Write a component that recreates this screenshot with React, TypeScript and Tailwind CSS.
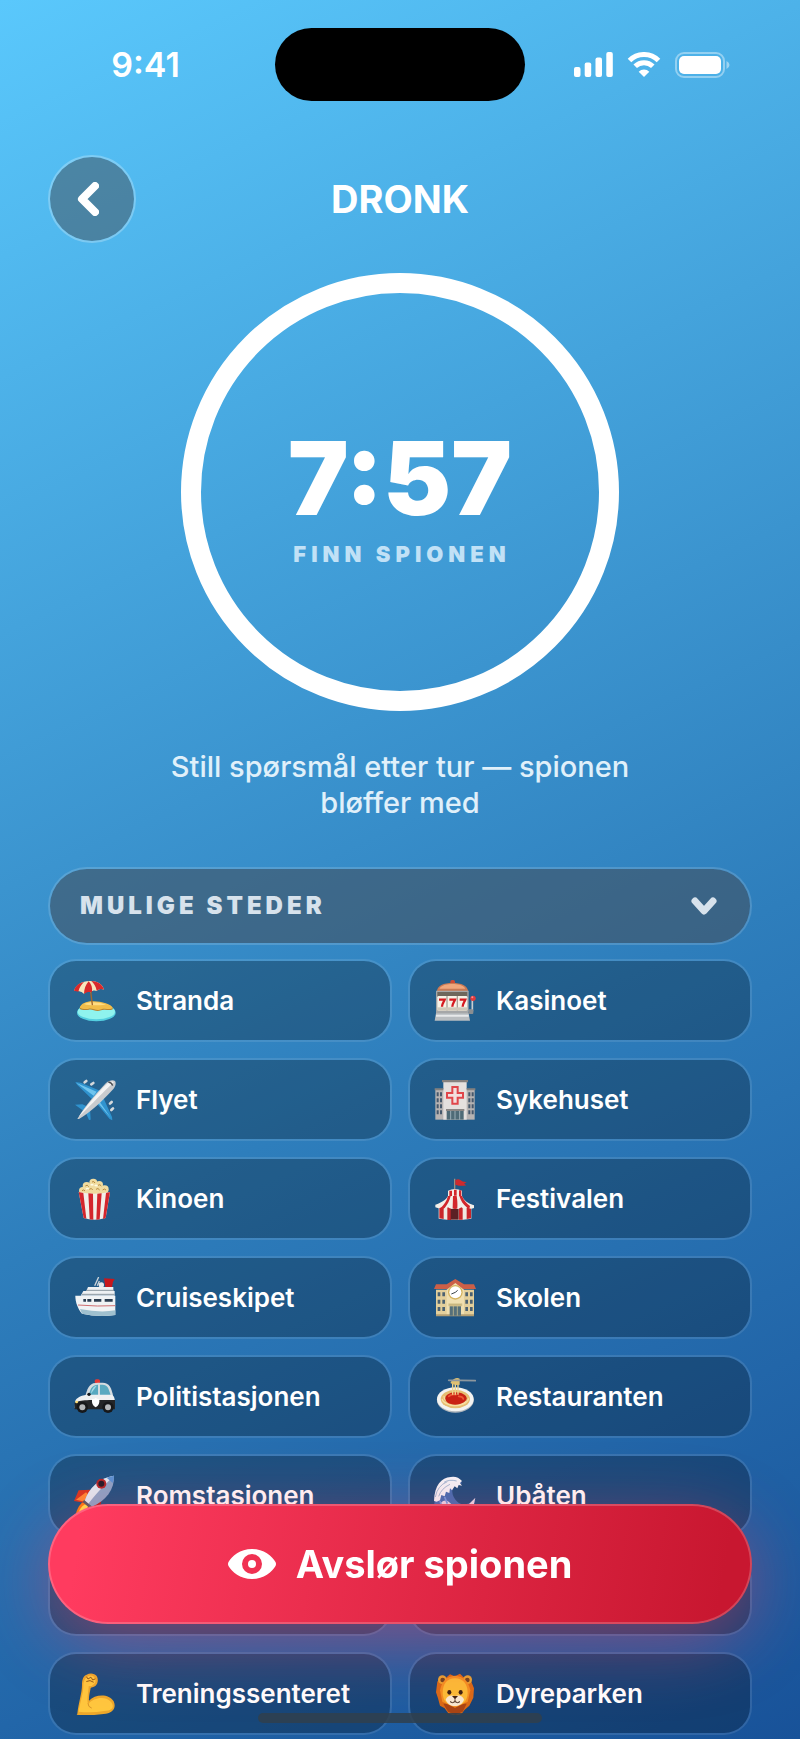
import type { ReactNode } from "react";

function Pic({ children }: { children: ReactNode }) {
  return (
    <svg viewBox="0 0 126 126" className="size-[42px] shrink-0" aria-hidden="true">
      {children}
    </svg>
  );
}

const Beach = () => (
  <Pic>
    <ellipse cx="67" cy="98" rx="58" ry="26" fill="#54cfe0" />
    <ellipse cx="67" cy="95" rx="56" ry="23" fill="#8ff3ee" />
    <path d="M17 86c2-14 22-22 42-21 24 0 56 10 58 22-8 8-24-2-36 4-14 7-24-4-36-2-10 2-22 2-28-3z" fill="#b98330" />
    <path d="M17 83c4-13 22-20 42-19 24 0 54 9 57 20-8 7-22-1-34 4-14 6-25-4-37-2-10 2-22 1-28-3z" fill="#f2bd4a" />
    <path d="M30 72c16-8 44-7 66 2-20 1-46 5-66-2z" fill="#ffdc83" />
    <path d="M50 34l5 40" stroke="#a3662a" strokeWidth="4" strokeLinecap="round" />
    <path d="M0 32C6 14 24 4 46 3c22-1 40 8 44 26-8-3-15-2-22 4-6-3-13-2-18 4-7-4-14-3-20 5-5-7-12-9-30-10z" fill="#f7e6bd" />
    <path d="M0 32C4 18 14 10 30 6 22 14 16 22 13 35zM30 42c0-14 5-28 14-38 8 8 12 18 10 33-8-2-16-2-24 5zM68 32C66 20 60 10 52 3c20 1 34 11 38 26-8-3-15-2-22 3z" fill="#d9292b" />
  </Pic>
);

const Slot = () => (
  <Pic>
    <rect x="49" y="0" width="14" height="12" rx="5" fill="#cf4b35" />
    <path d="M8 36C10 16 28 9 55 9s46 7 48 27z" fill="#c97a55" />
    <path d="M16 26C24 14 40 12 55 12s32 2 39 14z" fill="#f0a77c" />
    <path d="M6 32h98v70H6z" fill="#a5a7a8" />
    <path d="M10 36h90v14H10z" fill="#6e675c" />
    <rect x="10" y="48" width="90" height="44" rx="4" fill="#f7f2e6" />
    <path d="M39 48v44M70 48v44" stroke="#a9a299" strokeWidth="4" />
    <path d="M10 82h90v10H10z" fill="#d0c9ba" />
    <path d="M15 59h17c-2 6-8 12-8 21M46 59h17c-2 6-8 12-8 21M77 59h17c-2 6-8 12-8 21" fill="none" stroke="#d51b20" strokeWidth="7" />
    <path d="M6 100h98l4 22H2z" fill="#b9bdc0" />
    <path d="M6 104h98v6H6z" fill="#e7e9ea" />
    <path d="M104 92h11V60" fill="none" stroke="#c8cdd1" strokeWidth="5" />
    <rect x="104" y="88" width="14" height="14" rx="3" fill="#8b8e91" />
    <circle cx="117" cy="55" r="8" fill="#e23a3c" />
    <circle cx="115" cy="52" r="3" fill="#ff8f8f" />
  </Pic>
);

const Plane = () => (
  <Pic>
    <path d="M4 9l16 2 60 25-24 26L10 18zM88 56l26 58 1 10-8-4-40-48zM3 77l22-1 18 8-14 12zM34 98l14-10 2 34-5 1z" fill="#2f93cf" />
    <path d="M6 11l62 27-9 12zM78 70l32 46-40-46z" fill="#6fc4ee" />
    <path d="M10 120C28 88 58 52 96 12c10-9 22-10 27-6 4 6 2 17-7 26C84 66 54 96 15 120z" fill="#c9cbce" />
    <path d="M14 114C36 82 66 46 99 14c8-7 17-8 21-5-30 28-66 66-106 105z" fill="#f3f3f3" />
    <path d="M103 9q10 1 13 11" fill="none" stroke="#4a4d52" strokeWidth="4" />
    <path d="M32 10l5-4M52 16l6-4M108 74l5-5M112 93l5-5" stroke="#d5d9dc" strokeWidth="8" strokeLinecap="round" />
  </Pic>
);

const Hospital = () => (
  <Pic>
    <rect x="4" y="30" width="118" height="92" fill="#b7b3b2" />
    <rect x="28" y="6" width="70" height="116" fill="#e4e0de" />
    <path d="M24 3h78v7H24zM2 28h26v6H2zM98 28h26v6H98z" fill="#85817f" />
    <path d="M8 40h6v12H8zM18 40h6v12h-6zM8 58h6v12H8zM18 58h6v12h-6zM8 76h6v12H8zM18 76h6v12h-6zM8 94h6v12H8zM18 94h6v12h-6zM103 40h6v12h-6zM113 40h6v12h-6zM103 58h6v12h-6zM113 58h6v12h-6zM103 76h6v12h-6zM113 76h6v12h-6zM103 94h6v12h-6zM113 94h6v12h-6z" fill="#45586c" />
    <path d="M55 24h16v18h16v14H71v18H55V56H39V42h16z" fill="#f3dfdf" stroke="#e0464b" strokeWidth="6" />
    <rect x="38" y="92" width="51" height="30" fill="#4f6b77" />
    <path d="M36 90h55v6H36z" fill="#8b8785" />
    <path d="M50 96v26M63 96v26M77 96v26" stroke="#a8bcc4" strokeWidth="2.5" />
  </Pic>
);

const Popcorn = () => (
  <Pic>
    <g fill="#f0dca0">
      <circle cx="26" cy="38" r="11" />
      <circle cx="38" cy="24" r="12" />
      <circle cx="58" cy="14" r="12" />
      <circle cx="76" cy="20" r="11" />
      <circle cx="92" cy="34" r="12" />
      <circle cx="60" cy="34" r="20" />
      <circle cx="78" cy="38" r="14" />
      <circle cx="42" cy="38" r="14" />
    </g>
    <path d="M34 24q6-6 10 2M54 12q6-4 9 3M72 22q6-5 10 2M46 34q7-6 10 2M66 34q6-6 11 2M86 36q5-6 10 0M24 38q6-5 9 1" fill="none" stroke="#b98a3c" strokeWidth="3" />
    <path d="M50 22q4-5 8 0M62 24q5-5 8 1M36 34q4-5 8-1" fill="none" stroke="#fffbe4" strokeWidth="4" />
    <path d="M14 42q46 10 94 0l-13 78q-34 10-66 0z" fill="#f2efe9" />
    <path d="M14 42l14 3 9 77-8-2zM43 46l14 1 1 78-11-1zM70 47l13-1-6 78-10 1zM96 45l12-3-13 78-8 3z" fill="#d4262c" />
  </Pic>
);

const Circus = () => (
  <Pic>
    <path d="M62 2v34" stroke="#9b8f83" strokeWidth="4" />
    <path d="M64 6q10-5 16 1t18 5l-8 5 7 5q-16 4-33-2z" fill="#cf2a2d" />
    <path d="M14 80h98v42q-48 8-98 0z" fill="#efe9e2" />
    <path d="M16 84h13v39l-13-2zM40 86h11v40H40zM75 86h11v39H75zM98 84h13v37l-13 2z" fill="#c9252a" />
    <path d="M50 92h24v33H50z" fill="#5b2024" />
    <path d="M42 38q20-10 42 0v18H42z" fill="#f4efe9" />
    <path d="M46 38h8v16h-8zM60 35h8v18h-8zM75 37h7v17h-7z" fill="#d2272c" />
    <path d="M42 54h42c6 14 18 22 36 28v8q-12 5-20-2-8 8-18 0-10 8-20 0-10 8-20 0-8 6-18 0-10 5-20 0v-8c18-6 32-14 38-26z" fill="#f4efe9" />
    <path d="M42 54h8c-3 14-10 26-18 36q-6 4-12 0c10-10 18-20 22-36zM57 54h11c2 12 3 24 2 37q-8 4-14-1c0-12 1-24 1-36zM76 54h8c6 14 14 22 24 30l-2 8q-6 0-8-4C88 80 80 68 76 54z" fill="#d2272c" />
  </Pic>
);

const Ship = () => (
  <Pic>
    <path d="M62 26l12-26M70 26l6-14" stroke="#cfd5da" strokeWidth="4" />
    <path d="M90 4l32 2-5 8-3 16H94z" fill="#c7181d" />
    <circle cx="82" cy="24" r="8" fill="#e7ebee" />
    <path d="M42 30h76v14H36zM28 42h94v14H20z" fill="#eef1f3" />
    <path d="M36 40h84M24 52h98" stroke="#8b979f" strokeWidth="3" />
    <path d="M4 56h120v58q-50 8-100-4C12 96 4 76 4 56z" fill="#f0f3f5" />
    <path d="M18 96q60 12 106 4v14q-50 8-100-4z" fill="#9fc0cf" />
    <path d="M28 66h8v8h-8zM40 66h12v8H40zM60 66h22v8H60zM92 66h24v8H92z" fill="#2a3d50" />
    <path d="M12 84q60 5 112 2" fill="none" stroke="#cf6e70" strokeWidth="3" />
  </Pic>
);

const School = () => (
  <Pic>
    <path d="M6 38h114v78H6z" fill="#e3cf9b" />
    <path d="M0 36l6-14h32l26-16 26 16h30l6 14z" fill="#cc5f47" />
    <path d="M38 38l26-20 26 20v78H38z" fill="#f0dfb0" />
    <path d="M6 112h114v6H6z" fill="#b39f73" />
    <circle cx="64" cy="46" r="22" fill="#d4b35f" />
    <circle cx="64" cy="46" r="18" fill="#fff" />
    <path d="M64 46l-12 5M64 46l7-6" stroke="#394248" strokeWidth="3" />
    <path d="M11 46h8v12h-8zM25 46h8v12h-8zM11 68h8v12h-8zM25 68h8v12h-8zM11 90h8v12h-8zM25 90h8v12h-8zM94 46h8v12h-8zM108 46h8v12h-8zM94 68h8v12h-8zM108 68h8v12h-8zM94 90h8v12h-8zM108 90h8v12h-8z" fill="#4b6171" />
    <path d="M47 84h34v32H47z" fill="#56707a" />
    <path d="M44 80h40v7H44zM58 86v30M70 86v30" fill="#c9b57e" stroke="#d8c894" strokeWidth="2" />
  </Pic>
);

const Police = () => (
  <Pic>
    <rect x="62" y="10" width="16" height="12" rx="5" fill="#e53a36" />
    <path d="M34 60C42 28 50 20 72 20h14c20 0 26 14 32 42z" fill="#d5dce0" />
    <path d="M44 58c6-24 12-31 28-32v32zM78 26h8c14 0 18 10 24 32H78z" fill="#58a9c0" />
    <path d="M50 54c4-18 9-23 18-25z" fill="#a5dae6" />
    <path d="M4 74c4-10 20-18 42-18h66c8 2 11 12 11 24v16H2z" fill="#eef0f1" />
    <path d="M2 80c14-6 24-7 44-8h77v28H2z" fill="#242527" />
    <circle cx="25" cy="94" r="17" fill="#17181a" />
    <circle cx="102" cy="94" r="17" fill="#17181a" />
    <circle cx="25" cy="94" r="9" fill="#b5b7b9" />
    <circle cx="102" cy="94" r="9" fill="#b5b7b9" />
    <path d="M54 70q10-1 11-5 2 4 11 5 2 19-11 24-13-5-11-24z" fill="#fff" />
    <circle cx="45" cy="55" r="5" fill="#17181a" />
    <circle cx="8" cy="78" r="4" fill="#ffdf72" />
  </Pic>
);

const Pasta = () => (
  <Pic>
    <ellipse cx="64" cy="73" rx="55" ry="37" fill="#aeb5bb" />
    <ellipse cx="64" cy="70" rx="55" ry="36" fill="#f3f3f1" />
    <ellipse cx="64" cy="69" rx="44" ry="28" fill="#e6be72" />
    <path d="M24 69c6 24 72 30 80-2M30 60c-4 20 52 34 66 14M34 80q26 18 60 0" fill="none" stroke="#f7dfa3" strokeWidth="3.5" />
    <path d="M34 67c0-10 12-17 30-18 20 0 34 9 34 18s-14 19-34 19-30-8-30-19z" fill="#c92214" />
    <path d="M44 61q10-8 22-5M74 61q12 0 14 8" fill="none" stroke="#ee5a35" strokeWidth="5" strokeLinecap="round" />
    <path d="M56 56V20M64 56V16M72 56V22" stroke="#efd48c" strokeWidth="4" />
    <path d="M50 18q14-16 27-10v18q-14 4-27-4z" fill="#dfc071" />
    <path d="M44 13h34l46 1" fill="none" stroke="#8d979e" strokeWidth="5" strokeLinecap="round" />
  </Pic>
);

const Rocket = () => (
  <Pic>
    <path d="M4 122c4-18 14-40 30-44l16 14c-8 18-26 28-46 30z" fill="#ff7a12" />
    <path d="M12 116c6-16 14-26 24-28l6 6c-6 12-14 18-30 22z" fill="#ffe14d" />
    <path d="M50 44L14 46 0 78l34 6z" fill="#d8371f" />
    <path d="M82 78L76 110 44 122l-2-32z" fill="#b3201c" />
    <path d="M6 74l30-22 6 6-10 22z" fill="#ff8934" />
    <path d="M32 78C44 40 76 8 120 2c2 40-24 76-68 94z" fill="#8aa5c8" />
    <path d="M32 78C44 40 76 8 120 2 100 22 70 50 42 88z" fill="#dfeaf4" />
    <path d="M98 8q14-5 22-6 0 12-4 22z" fill="#5893d5" />
    <circle cx="82" cy="26" r="15" fill="#b3282b" />
    <circle cx="82" cy="26" r="9" fill="#231c2a" />
    <path d="M28 78l26 22" stroke="#555c66" strokeWidth="8" />
  </Pic>
);

const Wave = () => (
  <Pic>
    <path d="M0 122C-2 60 14 18 50 12c18-4 32 4 34 14-12-4-20 2-26 10-8 14 0 34 12 44 16 14 34 8 54-6-6 28-20 48-30 48z" fill="#3f6fb5" />
    <path d="M0 78C2 30 22 8 50 6q20-4 34 12l-6 6 6 8-10-2-4 10-8-6-8 12-6-6-2 14-10-4-4 14-10-4-4 16-10 4z" fill="#f4f7fb" />
    <path d="M4 66q6-34 36-46M14 64q8-24 34-36M30 22q16-10 38-4" fill="none" stroke="#a2bbd6" strokeWidth="3" />
    <path d="M20 84q12-12 24-4l18 16 24 10 38-38-12 54H14z" fill="#e5dceb" />
    <path d="M32 66l8 20M18 78l8 24" stroke="#6f9be0" strokeWidth="5" />
  </Pic>
);

const Arm = () => (
  <Pic>
    <path d="M10 122C14 88 24 60 24 36 24 20 28 8 38 5c10-6 24-4 30 4 6 10 4 22-4 30-6 4-12 4-14 6-2 12-6 24-5 38 18-20 60-22 74 2 10 22-6 38-30 38q-40 6-81 2z" fill="#eda82b" />
    <path d="M14 116C18 88 28 62 28 38q0-20 12-27 14-8 22 3 6 10-1 18-6 8-17 8c0 14-6 34-2 54 18-22 54-26 70-6 12 18-2 26-22 26q-36 6-76 2z" fill="#ffc83e" />
    <path d="M38 12l4 6 8-5M52 14l4 7 7-3M38 25q10-6 20 2" fill="none" stroke="#925b18" strokeWidth="3" strokeLinecap="round" />
    <path d="M42 92q0 10 10 13" fill="none" stroke="#d8952a" strokeWidth="3" strokeLinecap="round" />
  </Pic>
);

const Lion = () => (
  <Pic>
    <path d="M10 26l14-18 12 6 12-10 14 6 16-8 10 10 16-2 8 16 8 20-2 28-12 24-14 12-10 14-18 4-20-6-12-16-14-8-6-22-6-18z" fill="#d96a16" />
    <path d="M28 92l14 24 22 10 22-10 12-24z" fill="#a94514" />
    <circle cx="25" cy="20" r="13" fill="#e6a331" />
    <circle cx="101" cy="20" r="13" fill="#e6a331" />
    <circle cx="26" cy="21" r="7" fill="#6e431f" />
    <circle cx="100" cy="21" r="7" fill="#6e431f" />
    <path d="M18 52q8-42 45-44 38 2 46 44l-8 34-38 18-38-18z" fill="#f49021" />
    <path d="M26 60c0-28 14-44 37-44s38 16 38 44c0 24-16 38-38 38S26 84 26 60z" fill="#fbbd36" />
    <path d="M62 70c8-6 26-2 28 10-4 13-16 19-28 19S40 92 35 80c3-12 20-16 27-10z" fill="#f8ead3" />
    <ellipse cx="46" cy="58" rx="6" ry="7" fill="#3b2110" />
    <ellipse cx="80" cy="58" rx="6" ry="7" fill="#3b2110" />
    <path d="M54 69h18l-9 10z" fill="#3b2110" />
    <path d="M63 79v7M63 86q-8 6-15 0M63 86q8 6 15 0" fill="none" stroke="#3b2110" strokeWidth="3" />
  </Pic>
);

const places: { name?: string; icon?: ReactNode }[] = [
  { name: "Stranda", icon: <Beach /> },
  { name: "Kasinoet", icon: <Slot /> },
  { name: "Flyet", icon: <Plane /> },
  { name: "Sykehuset", icon: <Hospital /> },
  { name: "Kinoen", icon: <Popcorn /> },
  { name: "Festivalen", icon: <Circus /> },
  { name: "Cruiseskipet", icon: <Ship /> },
  { name: "Skolen", icon: <School /> },
  { name: "Politistasjonen", icon: <Police /> },
  { name: "Restauranten", icon: <Pasta /> },
  { name: "Romstasjonen", icon: <Rocket /> },
  { name: "Ubåten", icon: <Wave /> },
  {},
  {},
  { name: "Treningssenteret", icon: <Arm /> },
  { name: "Dyreparken", icon: <Lion /> },
];

function StatusBar() {
  return (
    <header className="grid grid-cols-[1fr_250px_1fr] items-center pt-7">
      <span className="pl-4 text-center text-[34px] leading-10 font-semibold">9:41</span>
      <div className="h-[73px] rounded-full bg-black" />
      <div className="flex items-center justify-end gap-[14px] pr-[70px]">
        <svg viewBox="0 0 39 25" className="h-[25px] w-[39px]" fill="white" aria-hidden="true">
          <rect x="0" y="15" width="6.500" height="10" rx="2" />
          <rect x="10.700" y="10.500" width="6.500" height="14.500" rx="2" />
          <rect x="21.500" y="5.500" width="6.500" height="19.500" rx="2" />
          <rect x="32.300" y="0" width="6.500" height="25" rx="2" />
        </svg>
        <svg viewBox="0 0 34 25" className="h-[25px] w-[34px]" aria-hidden="true">
          <path d="M2.500 8.500a20.500 20.500 0 0 1 29 0M8.200 14.300a12.500 12.500 0 0 1 17.600 0" fill="none" stroke="white" strokeWidth="5" />
          <path d="M17 25l-5.300-5.300a7.500 7.500 0 0 1 10.600 0z" fill="white" />
        </svg>
        <svg viewBox="0 0 55 26" className="h-[26px] w-[55px]" aria-hidden="true">
          <rect x="1" y="1" width="48" height="24" rx="8" fill="none" stroke="white" strokeOpacity="0.4" strokeWidth="2" />
          <rect x="4" y="4" width="42" height="18" rx="5" fill="white" />
          <path d="M51.500 9q3 1.500 3 4t-3 4z" fill="white" fillOpacity="0.45" />
        </svg>
      </div>
    </header>
  );
}

function Timer() {
  return (
    <div className="mx-auto mt-[30px] flex size-[438px] flex-col items-center justify-center rounded-full border-[20px] border-white">
      <div role="timer" className="text-[102px] leading-[124px] font-black">
        7:57
      </div>
      <div className="pl-1 text-[22px] leading-7 font-black tracking-[5px] text-[#c1e1f6]">FINN SPIONEN</div>
    </div>
  );
}

export default function App() {
  return (
    <div className="min-h-screen overflow-hidden bg-[linear-gradient(155deg,#5ac8fc_0%,#2e7ebc_60%,#185299_100%)] pb-1 font-['Inter',sans-serif] text-white">
      <StatusBar />
      <main className="px-12">
        <div className="mt-[54px] grid grid-cols-[88px_1fr_88px] items-center">
          <button type="button" aria-label="Tilbake" className="flex size-[88px] items-center justify-center rounded-full border-2 border-white/25 bg-[#455864]/55 bg-clip-padding">
            <svg viewBox="0 0 22 34" className="mr-2 h-[34px] w-[22px]" fill="none" stroke="white" strokeWidth="8" strokeLinecap="round" strokeLinejoin="round" aria-hidden="true">
              <path d="M18 4L5 17l13 13" />
            </svg>
          </button>
          <h1 className="text-center text-[38px] leading-[46px] font-bold">DRONK</h1>
        </div>
        <Timer />
        <p className="mx-auto mt-[38px] max-w-[500px] text-center text-[29px] leading-9 font-medium text-[#e0f0fa]">
          Still spørsmål etter tur — spionen bløffer med
        </p>
        <button type="button" aria-expanded="true" className="mt-[46px] flex h-[78px] w-full items-center justify-between rounded-full border-2 border-white/15 bg-[#425160]/60 bg-clip-padding pr-[33px] pl-[30px] text-2xl font-black tracking-[4px] text-[#d7e2ec]">
          MULIGE STEDER
          <svg viewBox="0 0 26 18" className="h-[18px] w-[26px]" fill="none" stroke="currentColor" strokeWidth="7" strokeLinecap="round" strokeLinejoin="round" aria-hidden="true">
            <path d="M4 4l9 10 9-10" />
          </svg>
        </button>
        <ul className="mt-[14px] grid grid-cols-2 gap-4">
          {places.map((place, i) => (
            <li key={i} className="flex h-[83px] items-center gap-5 rounded-[28px] border-2 border-white/10 bg-black/26 bg-clip-padding px-6 text-[26px] leading-8 font-semibold">
              {place.icon}
              {place.name}
            </li>
          ))}
        </ul>
      </main>
      <div className="fixed inset-x-12 bottom-[115px]">
        <button type="button" className="flex h-[120px] w-full items-center justify-center gap-5 rounded-full border-2 border-white/20 bg-[linear-gradient(100deg,#ff3b5f_5%,#c81730_95%)] bg-origin-border text-[38px] leading-[46px] font-bold shadow-[0_18px_72px_rgba(255,59,92,0.45)]">
          <svg viewBox="0 0 48 30" className="h-[30px] w-12" aria-hidden="true">
            <path fill="white" fillRule="evenodd" d="M24 0c12 0 20 7 23.500 13q1 2 0 4C44 23 36 30 24 30S4 23 .5 17q-1-2 0-4C4 7 12 0 24 0zm0 5a10 10 0 1 0 0 20 10 10 0 0 0 0-20z" />
            <circle cx="24" cy="15" r="4" fill="white" />
          </svg>
          Avslør spionen
        </button>
      </div>
      <div className="fixed bottom-4 left-1/2 h-[10px] w-[284px] -translate-x-1/2 rounded-full bg-[#303f4c]/85" />
    </div>
  );
}
